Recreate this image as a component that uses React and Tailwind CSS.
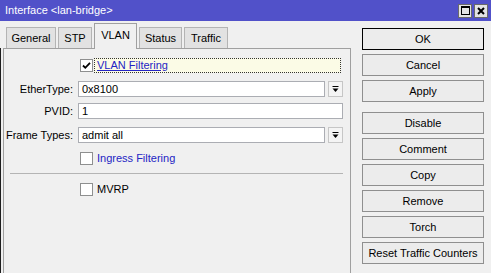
import React from "react";

const DropArrow = () => (
  <svg width="7" height="7" viewBox="0 0 7 7">
    <rect x="0.5" y="0" width="6" height="1" fill="#000" />
    <path d="M0.5 2.5h6L3.5 6z" fill="#000" />
  </svg>
);

const Check = () => (
  <svg width="9" height="9" viewBox="0 0 9 9">
    <path d="M1 4.5l2.3 2.3L8 1.8" stroke="#000" strokeWidth="1.8" fill="none" />
  </svg>
);

const CheckBox = ({ checked }) => (
  <div className="w-[13px] h-[13px] border border-[#8e8f8f] bg-white flex items-center justify-center shrink-0">
    {checked && <Check />}
  </div>
);

const Field = ({ label, value, combo }) => (
  <div className="flex items-center h-[16px]">
    <div className="w-[70px] text-right pr-px">{label}</div>
    <div
      className={`ml-[4px] h-[16px] bg-white border border-[#abadb3] flex items-center pl-[3px] ${
        combo ? "w-[247px]" : "w-[265px]"
      }`}
    >
      {value}
    </div>
    {combo && (
      <div className="ml-[3px] w-[15px] h-[16px] border border-[#c6c6c6] bg-[#f4f4f4] flex items-center justify-center">
        <DropArrow />
      </div>
    )}
  </div>
);

const Btn = ({ children, main, className = "" }) => (
  <div
    className={`h-[22px] flex items-center justify-center bg-[#ececec] border ${
      main ? "border-black" : "border-[#8f8f8f]"
    } ${className}`}
  >
    {children}
  </div>
);

const tabs = [
  { name: "General", w: "w-[50px]" },
  { name: "STP", w: "w-[34px]" },
  { name: "VLAN", w: "w-[43px]", active: true },
  { name: "Status", w: "w-[43px]" },
  { name: "Traffic", w: "w-[44px]" },
];

export default function App() {
  return (
    <div className="w-[491px] h-[273px] overflow-hidden bg-[#f0f0f0] font-['Liberation_Sans',Arial,sans-serif] text-[11px] text-black leading-none">
      {/* title bar */}
      <div className="h-[21px] bg-[#5151c9] flex items-center justify-between pl-[5px] pr-[3px] text-white">
        <span>Interface &lt;lan-bridge&gt;</span>
        <div className="flex gap-[2px]">
          <div className="w-[14px] h-[14px] bg-[#e4e4e4] border border-[#6a6a6a] flex items-center justify-center">
            <div className="w-[9px] h-[9px] border border-black border-t-2" />
          </div>
          <div className="w-[14px] h-[14px] bg-[#e4e4e4] border border-[#6a6a6a] flex items-center justify-center">
            <svg width="8" height="8" viewBox="0 0 8 8">
              <path d="M1 1l6 6M7 1L1 7" stroke="#000" strokeWidth="2" />
            </svg>
          </div>
        </div>
      </div>

      <div className="flex">
        {/* left: tabs + panel */}
        <div className="w-[351px] flex flex-col">
          <div className="h-[27px] flex items-end pl-[6px] gap-[2px]">
            {tabs.map((t) =>
              t.active ? (
                <div
                  key={t.name}
                  className={`${t.w} h-[26px] -mb-px relative z-10 bg-[#f0f0f0] border border-b-0 border-[#a0a0a0] flex items-start justify-center pt-[6px]`}
                >
                  {t.name}
                </div>
              ) : (
                <div
                  key={t.name}
                  className={`${t.w} h-[21px] bg-[#e2e2e2] border border-b-0 border-[#b4b4b4] flex items-center justify-center`}
                >
                  {t.name}
                </div>
              )
            )}
          </div>
          <div className="h-[225px] border-l border-[#1e1e1e] pl-[2px]">
            <div className="h-full border-l border-t border-r border-[#a0a0a0] flex flex-col">
              {/* VLAN Filtering */}
              <div className="mt-[8px] h-[16px] flex items-center">
                <div className="w-[76px]" />
                <CheckBox checked />
                <div className="ml-[1px] w-[247px] h-[15px] border border-dotted border-[#333] bg-[#fbfbe6] flex items-center pl-[2px]">
                  <span className="text-[#2424c4] underline">VLAN Filtering</span>
                </div>
              </div>
              <div className="mt-[8px]">
                <Field label="EtherType:" value="0x8100" combo />
              </div>
              <div className="mt-[6px]">
                <Field label="PVID:" value="1" />
              </div>
              <div className="mt-[8px]">
                <Field label="Frame Types:" value="admit all" combo />
              </div>
              {/* Ingress Filtering */}
              <div className="mt-[7px] h-[16px] flex items-center">
                <div className="w-[76px]" />
                <CheckBox />
                <span className="ml-[4px] text-[#2424c4]">Ingress Filtering</span>
              </div>
              <div className="mt-[7px] ml-[6px] w-[333px] border-t border-[#b4b4b4]" />
              {/* MVRP */}
              <div className="mt-[7px] h-[16px] flex items-center">
                <div className="w-[76px]" />
                <CheckBox />
                <span className="ml-[4px]">MVRP</span>
              </div>
            </div>
          </div>
        </div>

        {/* right: buttons */}
        <div className="ml-[11px] w-[122px] flex flex-col gap-[4px] pt-[7px]">
          <Btn main>OK</Btn>
          <Btn>Cancel</Btn>
          <Btn>Apply</Btn>
          <Btn className="mt-[6px]">Disable</Btn>
          <Btn>Comment</Btn>
          <Btn>Copy</Btn>
          <Btn>Remove</Btn>
          <Btn>Torch</Btn>
          <Btn>Reset Traffic Counters</Btn>
        </div>
      </div>
    </div>
  );
}
